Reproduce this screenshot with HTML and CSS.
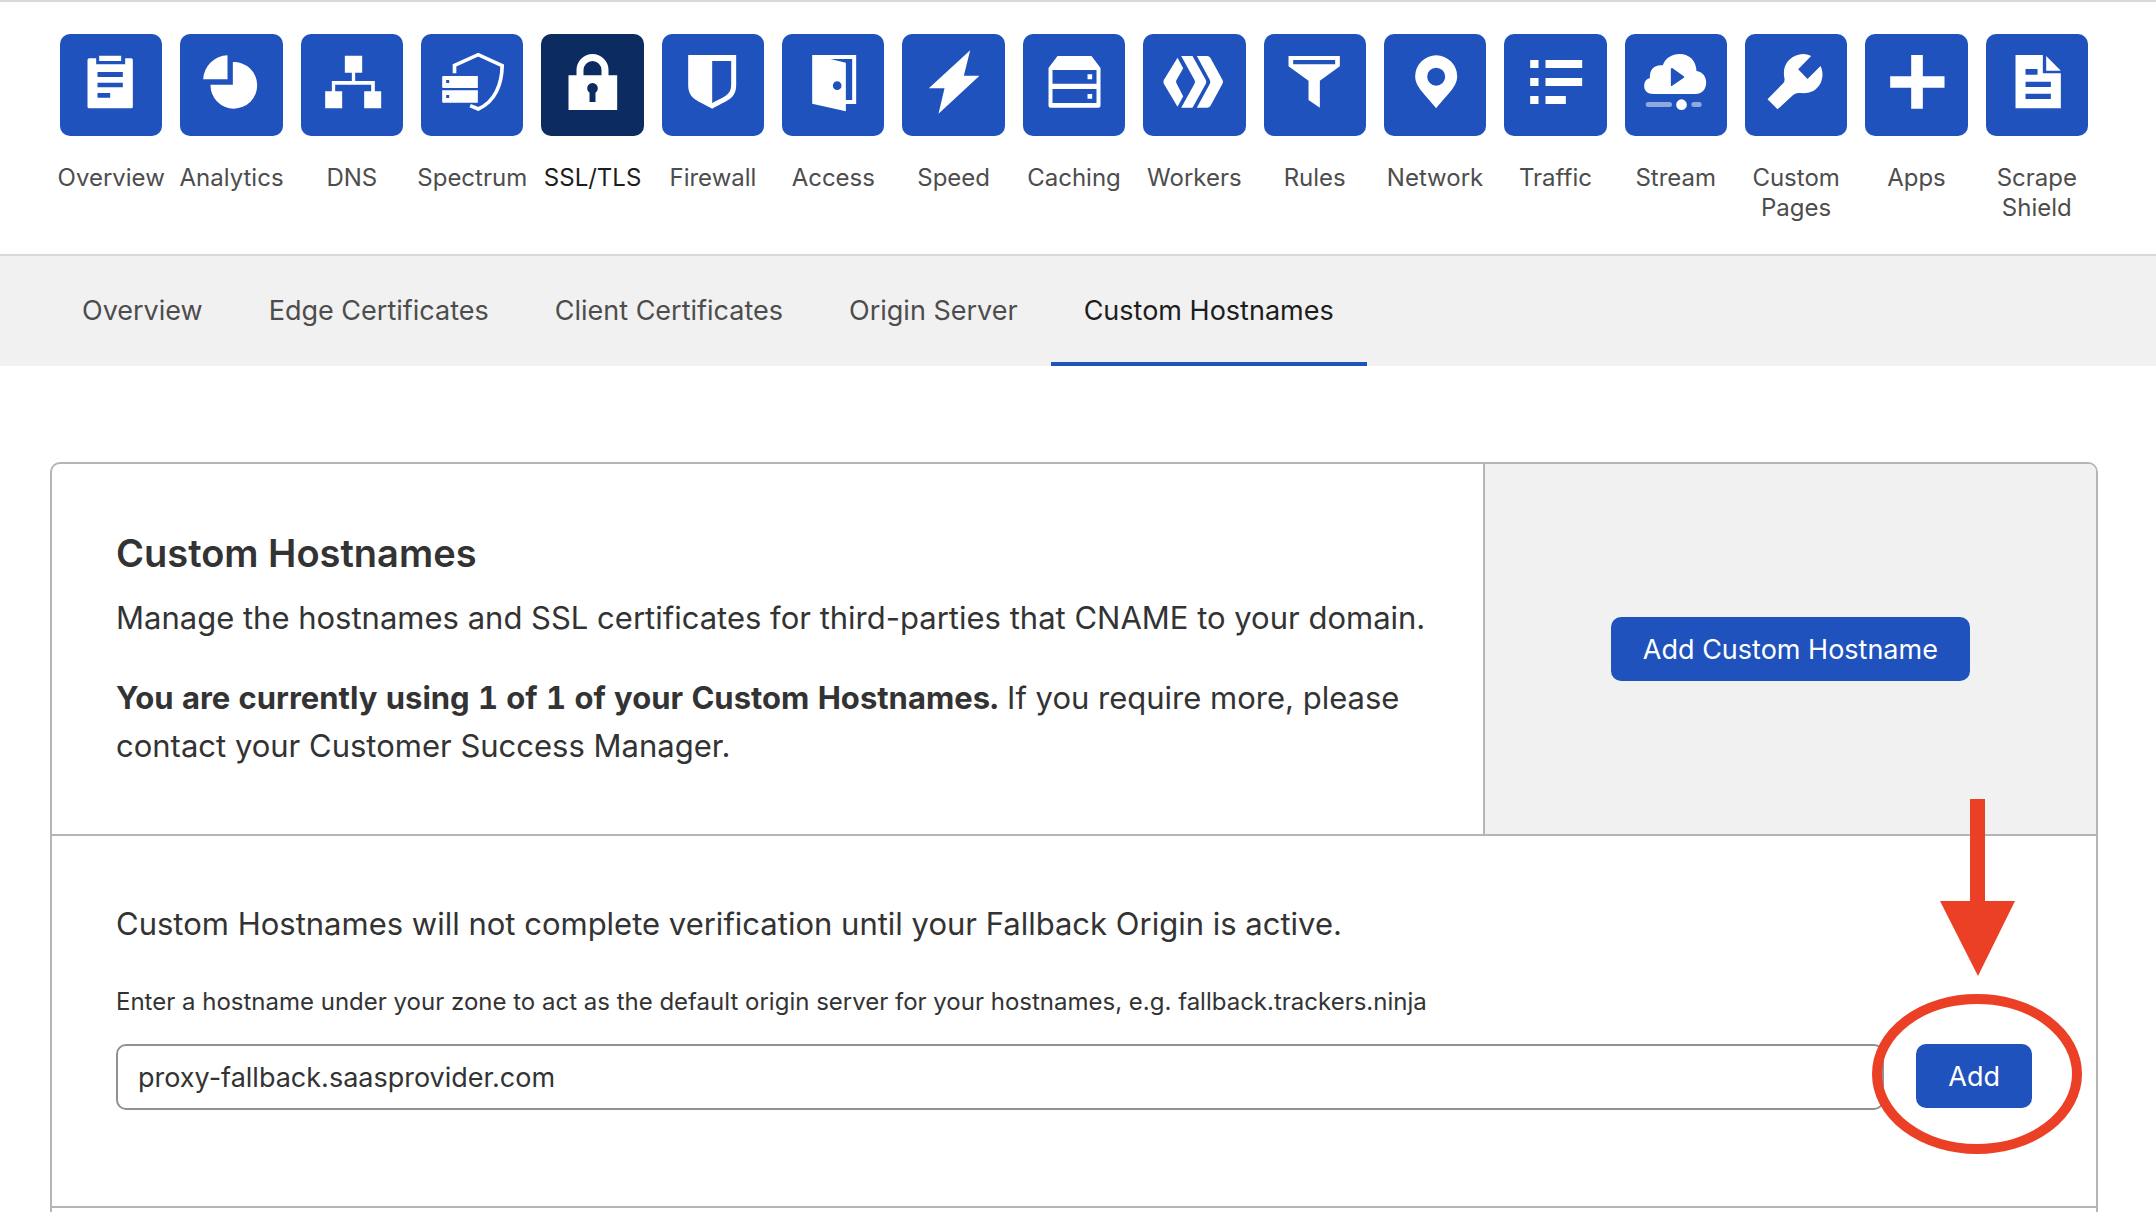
FILE: index.html
```html
<!DOCTYPE html>
<html lang="en">
<head>
<meta charset="utf-8">
<meta name="viewport" content="width=device-width, initial-scale=1">
<title>Custom Hostnames</title>
<link rel="stylesheet" href="styles.css">
</head>
<body>
<nav class="apps" aria-label="Products">
  <a class="app" href="#overview"><span class="tile"><svg viewBox="0 0 306 306" aria-hidden="true"><path fill-rule="evenodd" d="M87 73H108V91H195V73H213a5 5 0 0 1 5 5V218a5 5 0 0 1-5 5H87a5 5 0 0 1-5-5V78a5 5 0 0 1 5-5ZM112 114V129H188V114ZM112 146V160H188V146ZM112 177V191H150V177ZM117 65H183V81H117Z"/></svg></span><span class="name">Overview</span></a>
  <a class="app" href="#analytics"><span class="tile"><svg viewBox="0 0 306 306" aria-hidden="true"><path d="M142 64V136H69A75 75 0 0 1 142 64ZM158 84A70 70 0 1 1 91 152H158Z"/></svg></span><span class="name">Analytics</span></a>
  <a class="app" href="#dns"><span class="tile"><svg viewBox="0 0 306 306" aria-hidden="true"><path d="M131 65H183V116H162V141H221V172H240V223H189V172H210V152H102V172H123V223H72V172H92V141H152V116H131Z"/></svg></span><span class="name">DNS</span></a>
  <a class="app" href="#spectrum"><span class="tile"><svg viewBox="0 0 306 306" aria-hidden="true"><path class="line" d="M100 118V94L171 62L243 95C242 150 222 203 171 225L147 215"/><path fill-rule="evenodd" d="M66 126H170V162H66a3 3 0 0 1-3-3V129a3 3 0 0 1 3-3ZM75 138V147H84V138ZM63 169H170V206H66a3 3 0 0 1-3-3ZM75 183V192H84V183Z"/></svg></span><span class="name">Spectrum</span></a>
  <a class="app active" href="#ssl" aria-current="page"><span class="tile"><svg viewBox="0 0 306 306" aria-hidden="true"><path fill-rule="evenodd" d="M82 124H106V108a48 48 0 0 1 96 0V124H228V228H82ZM127 124H181V108a27 27 0 0 0-54 0ZM145 176V204H163V176A16 16 0 1 0 145 176Z"/></svg></span><span class="name">SSL/TLS</span></a>
  <a class="app" href="#firewall"><span class="tile"><svg viewBox="0 0 306 306" aria-hidden="true"><path fill-rule="evenodd" d="M78 63H222V153C222 196 192 200 150 224C108 200 78 196 78 153ZM150 81V207C185 188 207 184 207 153V81Z"/></svg></span><span class="name">Firewall</span></a>
  <a class="app" href="#access"><span class="tile"><svg viewBox="0 0 306 306" aria-hidden="true"><path fill-rule="evenodd" d="M90 63H222V210H191V232L90 209ZM145 75L191 86V198H210V75ZM165 142a13 13 0 1 0 0 26a13 13 0 1 0 0-26Z"/></svg></span><span class="name">Access</span></a>
  <a class="app" href="#speed"><span class="tile"><svg viewBox="0 0 306 306" aria-hidden="true"><path d="M204 49L185 125H232L109 239L127 163H80Z"/></svg></span><span class="name">Speed</span></a>
  <a class="app" href="#caching"><span class="tile"><svg viewBox="0 0 306 306" aria-hidden="true"><path fill-rule="evenodd" d="M103 66H205L232 102V215a6 6 0 0 1-6 6H82a6 6 0 0 1-6-6V102ZM88 108V149H220V108ZM88 165V207H220V165ZM193 121H207V136H193ZM193 180H207V194H193Z"/></svg></span><span class="name">Caching</span></a>
  <a class="app" href="#workers"><span class="tile"><svg viewBox="0 0 306 306" aria-hidden="true"><path d="M103 71L120 103L100 138Q97 143 100 148L120 187L103 218L62 149Q59 143 62 138ZM114 66H148L188 138Q191 143 188 149L148 221H114L154 149Q157 143 154 138ZM161 66H192Q198 66 202 72L238 138Q241 143 238 149L202 215Q198 221 192 221H161L200 149Q203 143 200 138Z"/></svg></span><span class="name">Workers</span></a>
  <a class="app" href="#rules"><span class="tile"><svg viewBox="0 0 306 306" aria-hidden="true"><path fill-rule="evenodd" d="M73 66H227V97L167 140V221L133 198V140L73 97ZM87 78V91H213V78Z"/></svg></span><span class="name">Rules</span></a>
  <a class="app" href="#network"><span class="tile"><svg viewBox="0 0 306 306" aria-hidden="true"><path fill-rule="evenodd" d="M156 64A63 63 0 0 1 219 127C219 160 188 182 156 223C124 182 93 160 93 127A63 63 0 0 1 156 64ZM156 101a27 27 0 1 0 0 54a27 27 0 1 0 0-54Z"/></svg></span><span class="name">Network</span></a>
  <a class="app" href="#traffic"><span class="tile"><svg viewBox="0 0 306 306" aria-hidden="true"><path d="M78 78H103V102H78ZM124 78H234V102H124ZM78 132H103V156H78ZM124 132H234V156H124ZM78 186H103V210H78ZM124 186H185V210H124Z"/></svg></span><span class="name">Traffic</span></a>
  <a class="app" href="#stream"><span class="tile"><svg viewBox="0 0 306 306" aria-hidden="true"><path fill-rule="evenodd" d="M86 180C66 180 57 170 57 156C57 143 64 134 74 133C73 106 87 91 113 94C120 72 140 60 164 60C192 60 213 80 214 111C232 113 243 128 243 145C243 166 231 180 212 180ZM141 102Q137 102 137 106V153Q137 157 141 155L176 131Q179 129 176 127Z"/><circle cx="169" cy="212" r="16"/><path opacity=".5" d="M69 204H133a7 7 0 0 1 0 15H69a7 7 0 0 1 0-15ZM206 204H222a7 7 0 0 1 0 15H206a7 7 0 0 1 0-15Z"/></svg></span><span class="name">Stream</span></a>
  <a class="app" href="#pages"><span class="tile"><svg viewBox="0 0 306 306" aria-hidden="true"><path d="M198 66L159 106L187 135L226 96C240 124 228 158 204 171C186 180 172 177 160 177Q151 177 143 184L97 226L67 196L114 148Q119 143 118 134C110 98 128 70 160 62Q180 57 198 66Z"/></svg></span><span class="name">Custom Pages</span></a>
  <a class="app" href="#apps"><span class="tile"><svg viewBox="0 0 306 306" aria-hidden="true"><path d="M138 63H173V127H238V161H173V224H138V161H75V127H138Z"/></svg></span><span class="name">Apps</span></a>
  <a class="app" href="#scrape"><span class="tile"><svg viewBox="0 0 306 306" aria-hidden="true"><path fill-rule="evenodd" d="M88 63H170V118H224V223H88ZM118 105V122H154V105ZM118 143V159H194V143ZM118 179V195H194V179ZM180 66L224 110H180Z"/></svg></span><span class="name">Scrape Shield</span></a>
</nav>

<nav class="tabs" aria-label="SSL/TLS">
  <a class="tab" href="#tab-overview">Overview</a>
  <a class="tab" href="#tab-edge">Edge Certificates</a>
  <a class="tab" href="#tab-client">Client Certificates</a>
  <a class="tab" href="#tab-origin">Origin Server</a>
  <a class="tab current" href="#tab-hostnames" aria-current="page">Custom Hostnames</a>
</nav>

<main class="content">
  <div class="card">
    <section class="intro">
      <div class="intro-text">
        <h1 class="title">Custom Hostnames</h1>
        <p class="text">Manage the hostnames and SSL certificates for third-parties that CNAME to your domain.</p>
        <p class="text"><strong>You are currently using 1 of 1 of your Custom Hostnames.</strong> If you require more, please contact your Customer Success Manager.</p>
      </div>
      <div class="intro-action">
        <button class="button" type="button">Add Custom Hostname</button>
      </div>
    </section>
    <section class="fallback">
      <p class="text">Custom Hostnames will not complete verification until your Fallback Origin is active.</p>
      <form class="form">
        <label class="hint" for="origin">Enter a hostname under your zone to act as the default origin server for your hostnames, e.g. fallback.trackers.ninja</label>
        <div class="form-row">
          <input class="field" id="origin" type="text" value="proxy-fallback.saasprovider.com">
          <div class="submit">
            <button class="button" type="button">Add</button>
            <svg class="callout" viewBox="0 0 214 358" aria-hidden="true">
              <path fill="#eb4025" d="M100 1H115V103H145L108 178L70 103H100Z"/>
              <ellipse cx="107" cy="276" rx="100" ry="75" fill="none" stroke="#eb4025" stroke-width="10"/>
            </svg>
          </div>
        </div>
      </form>
    </section>
  </div>
</main>
</body>
</html>
```
FILE: styles.css
```css
* {
  box-sizing: border-box;
}

body {
  display: flex;
  flex-direction: column;
  min-height: 100vh;
  margin: 0;
  background: #fff;
  color: #333;
  font-family: Inter, "Liberation Sans", sans-serif;
  font-size: 27px;
}

a {
  color: #4d4d4d;
  text-decoration: none;
}

/* Product bar */
.apps {
  display: grid;
  grid-template-columns: repeat(17, minmax(0, 1fr));
  gap: 18px;
  padding: 32px 68px 31px 60px;
  border-top: 2px solid #d9d9d9;
}

.app {
  display: flex;
  flex-direction: column;
  align-items: center;
  gap: 27px;
  font-size: 24px;
  line-height: 30px;
  text-align: center;
}

.tile {
  width: 100%;
  height: 102px;
  border-radius: 10px;
  background: #1f52bd;
}

.tile svg {
  display: block;
  width: 100%;
  height: 100%;
  fill: #fff;
}

.tile .line {
  fill: none;
  stroke: #fff;
  stroke-width: 11;
}

.active {
  color: #1d1d1d;
}

.active .tile {
  background: #0c2b61;
}

/* Section tabs */
.tabs {
  display: flex;
  padding: 0 49px;
  border-top: 2px solid #d9d9d9;
  background: #f1f1f1;
}

.tab {
  padding: 38px 33px 34px;
  border-bottom: 4px solid transparent;
  line-height: 34px;
}

.tab.current {
  border-bottom-color: #1f52bd;
  color: #1d1d1d;
}

/* Main card */
.content {
  display: flex;
  flex: 1;
  flex-direction: column;
  padding: 96px 58px 0 50px;
}

.card {
  flex: 1;
  border: 2px solid #b5b5b5;
  border-bottom: 0;
  border-radius: 10px 10px 0 0;
}

.intro {
  display: grid;
  grid-template-columns: 7fr 3fr;
  border-bottom: 2px solid #b5b5b5;
}

.intro-text {
  padding: 64px 32px 64px 64px;
}

.intro-action {
  display: flex;
  align-items: center;
  justify-content: center;
  border-left: 2px solid #b5b5b5;
  border-top-right-radius: 8px;
  background: #f1f1f1;
}

.title {
  margin: 0 0 16px;
  font-size: 38px;
  font-weight: 600;
  line-height: 50px;
}

.text {
  margin: 0;
  font-size: 31px;
  line-height: 48px;
}

.text + .text {
  margin-top: 32px;
}

.text strong {
  font-variant-numeric: tabular-nums;
}

.button {
  height: 64px;
  padding: 0 32px;
  border: 0;
  border-radius: 10px;
  background: #1f52bd;
  color: #fff;
  font: inherit;
}

.fallback {
  padding: 64px 64px 96px;
  border-bottom: 2px solid #b5b5b5;
}

.form {
  display: flex;
  flex-direction: column;
  gap: 24px;
  margin-top: 36px;
}

.hint {
  font-size: 24px;
  line-height: 36px;
}

.form-row {
  display: flex;
  align-items: flex-start;
  gap: 32px;
}

.field {
  flex: 1;
  min-width: 0;
  height: 66px;
  padding: 0 20px;
  border: 2px solid #8e9297;
  border-radius: 10px;
  background: #fff;
  color: #333;
  font: inherit;
}

.submit {
  position: relative;
  height: 64px;
}

/* Marker drawn over the Add button */
.callout {
  position: absolute;
  right: -52px;
  bottom: -48px;
  width: 214px;
  height: 358px;
  pointer-events: none;
}
```
